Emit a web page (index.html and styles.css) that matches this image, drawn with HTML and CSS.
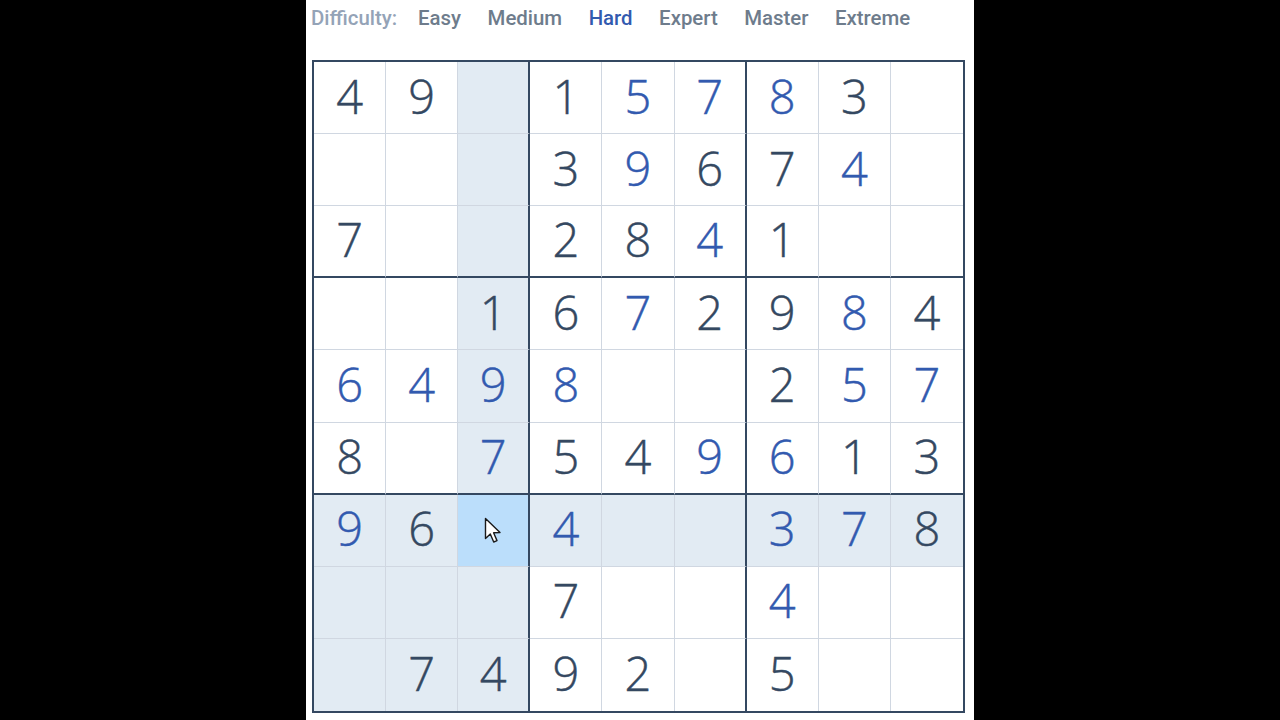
FILE: index.html
```html
<!DOCTYPE html>
<html>
<head>
<meta charset="utf-8">
<link rel="stylesheet" href="styles.css">
</head>
<body>
<div class="panel">
  <div class="difficulty">
    <span class="label">Difficulty:</span>
    <span class="level">Easy</span>
    <span class="level">Medium</span>
    <span class="level active">Hard</span>
    <span class="level">Expert</span>
    <span class="level">Master</span>
    <span class="level">Extreme</span>
  </div>
  <div class="board">
    <div class="c">4</div><div class="c">9</div><div class="c br hl"></div><div class="c">1</div><div class="c u">5</div><div class="c br u">7</div><div class="c u">8</div><div class="c">3</div><div class="c"></div>
    <div class="c"></div><div class="c"></div><div class="c br hl"></div><div class="c">3</div><div class="c u">9</div><div class="c br">6</div><div class="c">7</div><div class="c u">4</div><div class="c"></div>
    <div class="c bb">7</div><div class="c bb"></div><div class="c br bb hl"></div><div class="c bb">2</div><div class="c bb">8</div><div class="c br bb u">4</div><div class="c bb">1</div><div class="c bb"></div><div class="c bb"></div>
    <div class="c"></div><div class="c"></div><div class="c br hl">1</div><div class="c">6</div><div class="c u">7</div><div class="c br">2</div><div class="c">9</div><div class="c u">8</div><div class="c">4</div>
    <div class="c u">6</div><div class="c u">4</div><div class="c br hl u">9</div><div class="c u">8</div><div class="c"></div><div class="c br"></div><div class="c">2</div><div class="c u">5</div><div class="c u">7</div>
    <div class="c bb">8</div><div class="c bb"></div><div class="c br bb hl u">7</div><div class="c bb">5</div><div class="c bb">4</div><div class="c br bb u">9</div><div class="c bb u">6</div><div class="c bb">1</div><div class="c bb">3</div>
    <div class="c hl u">9</div><div class="c hl">6</div><div class="c br sel"><svg class="cursor" width="19" height="28" viewBox="0 0 19 28"><path d="M1.5 1.5 L1.5 21.5 L6.3 17 L9.7 25 L13 23.6 L9.6 15.8 L16 15.6 Z" fill="#ffffff" stroke="#1a1a1a" stroke-width="1.4" stroke-linejoin="round"/></svg></div><div class="c hl u">4</div><div class="c hl"></div><div class="c br hl"></div><div class="c hl u">3</div><div class="c hl u">7</div><div class="c hl">8</div>
    <div class="c hl"></div><div class="c hl"></div><div class="c br hl"></div><div class="c">7</div><div class="c"></div><div class="c br"></div><div class="c u">4</div><div class="c"></div><div class="c"></div>
    <div class="c hl last"></div><div class="c hl last">7</div><div class="c br hl last">4</div><div class="c last">9</div><div class="c last">2</div><div class="c br last"></div><div class="c last">5</div><div class="c last"></div><div class="c last"></div>
  </div>
</div>
</body>
</html>
```

FILE: styles.css
```css
html, body {
  margin: 0;
  padding: 0;
  background: #000000;
  height: 100%;
  overflow: hidden;
}

.panel {
  width: 668px;
  height: 720px;
  margin-left: 306px;
  background: #ffffff;
  padding-left: 6px;
  box-sizing: border-box;
}

.difficulty {
  display: flex;
  align-items: center;
  height: 36px;
  font-family: Roboto, "Liberation Sans", sans-serif;
  font-size: 20.4px;
  font-weight: 500;
  color: #6e7c8c;
  margin-bottom: 24px;
}

.difficulty .label {
  color: #94a3b7;
  margin-left: -1px;
  margin-right: 21px;
}

.difficulty .level {
  margin-right: 26.5px;
}

.difficulty .active {
  color: #325aaf;
}

.board {
  width: 653px;
  height: 653px;
  border: 2px solid #344861;
  box-sizing: border-box;
  display: grid;
  grid-template-columns: repeat(9, 1fr);
  grid-template-rows: repeat(9, 1fr);
  background: #ffffff;
}

.c {
  position: relative;
  display: flex;
  align-items: center;
  justify-content: center;
  padding-bottom: 3px;
  box-sizing: border-box;
  border-right: 1px solid #d0d7e1;
  border-bottom: 1px solid #d0d7e1;
  font-family: "Open Sans", "Liberation Sans", sans-serif;
  font-size: 47px;
  font-weight: 300;
  -webkit-text-stroke: 0.45px currentColor;
  color: #344861;
  line-height: 1;
}

.c:nth-child(9n) {
  border-right: none;
}

.c.last {
  border-bottom: none;
}

.c.br {
  border-right: 2px solid #344861;
}

.c.bb {
  border-bottom: 2px solid #344861;
}

.c.hl {
  background: #e2ebf3;
}

.c.sel {
  background: #bbdefb;
}

.c.u {
  color: #325aaf;
}

.cursor {
  position: absolute;
  left: 26px;
  top: 22px;
}
```
